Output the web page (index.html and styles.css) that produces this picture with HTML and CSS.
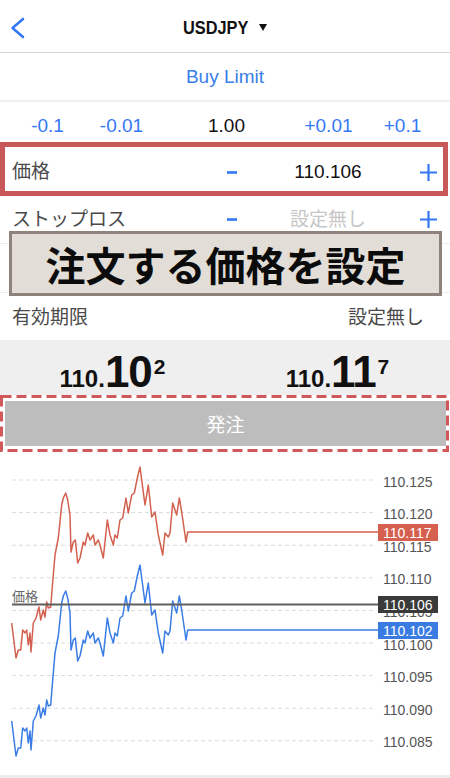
FILE: index.html
```html
<!DOCTYPE html>
<html lang="ja">
<head>
<meta charset="utf-8">
<title>USDJPY Buy Limit</title>
<link rel="stylesheet" href="styles.css">
</head>
<body>
<div class="page">
  <header class="nav">
    <svg class="back" width="16" height="22" viewBox="0 0 16 22"><path d="M14 2 L3.5 11 L14 20" fill="none" stroke="#3478f6" stroke-width="2.6" stroke-linecap="round" stroke-linejoin="round"/></svg>
    <div class="title"><span class="sym">USDJPY</span><svg class="caret" width="8" height="7" viewBox="0 0 8 7"><polygon points="0,0 8,0 4,7" fill="#111"/></svg></div>
    <div></div>
  </header>

  <div class="type">Buy Limit</div>

  <div class="steps">
    <span>-0.1</span><span>-0.01</span><span class="qty">1.00</span><span>+0.01</span><span>+0.1</span>
  </div>

  <div class="row price-row">
    <span class="label">価格</span>
    <span class="minus"><svg width="10" height="3" viewBox="0 0 10 3"><rect y="0.2" width="10" height="2.6" fill="#3478f6"/></svg></span>
    <span class="val">110.106</span>
    <span class="plus"><svg width="17" height="17" viewBox="0 0 17 17"><path d="M8.5 0 V17 M0 8.5 H17" stroke="#3478f6" stroke-width="2.2"/></svg></span>
  </div>

  <div class="row sl">
    <span class="label">ストップロス</span>
    <span class="minus"><svg width="10" height="3" viewBox="0 0 10 3"><rect y="0.2" width="10" height="2.6" fill="#3478f6"/></svg></span>
    <span class="val none">設定無し</span>
    <span class="plus"><svg width="17" height="17" viewBox="0 0 17 17"><path d="M8.5 0 V17 M0 8.5 H17" stroke="#3478f6" stroke-width="2.2"/></svg></span>
  </div>

  <div class="row tp"></div>

  <div class="exp">
    <span class="label">有効期限</span>
    <span class="label">設定無し</span>
  </div>

  <div class="quotes">
    <div class="q"><span class="s">110.</span><span class="b">10</span><span class="e">2</span></div>
    <div class="q"><span class="s">110.</span><span class="b">11</span><span class="e">7</span></div>
  </div>

  <div class="order">
    <div class="btn">発注</div>
    <svg class="dash" width="450" height="57" viewBox="0 0 450 57"><rect x="1.5" y="1.5" width="446" height="54" fill="none" stroke="#d0585b" stroke-width="3" stroke-dasharray="10 5"/></svg>
  </div>

  <svg class="chart" width="450" height="323" viewBox="0 452 450 323">
    <g stroke="#dadada" stroke-width="1" stroke-dasharray="4 3">
      <line x1="12" x2="374" y1="480" y2="480"/>
      <line x1="12" x2="374" y1="512.6" y2="512.6"/>
      <line x1="12" x2="374" y1="545.2" y2="545.2"/>
      <line x1="12" x2="374" y1="577.8" y2="577.8"/>
      <line x1="12" x2="374" y1="610.4" y2="610.4"/>
      <line x1="12" x2="374" y1="643" y2="643"/>
      <line x1="12" x2="374" y1="675.6" y2="675.6"/>
      <line x1="12" x2="374" y1="708.2" y2="708.2"/>
      <line x1="12" x2="374" y1="740.8" y2="740.8"/>
    </g>
    <g class="axis">
      <text x="383" y="486.5">110.125</text>
      <text x="383" y="519.1">110.120</text>
      <text x="383" y="551.7">110.115</text>
      <text x="383" y="584.3">110.110</text>
      <text x="383" y="616.9">110.105</text>
      <text x="383" y="649.5">110.100</text>
      <text x="383" y="682.1">110.095</text>
      <text x="383" y="714.7">110.090</text>
      <text x="383" y="747.3">110.085</text>
    </g>
    <path id="ask" d="M11.7 623 L16 658 L18.3 650 L20.7 650 L22.7 630 L25 633 L26.7 630 L28.3 645 L30 633 L31 652 L33.3 623 L36 618 L39 607 L40.7 620 L43.3 610 L45 617 L46.7 602 L48.3 608 L50.7 607 L52.7 582 L55 555 L58.3 538 L61.7 505 L63.3 498 L65.7 493 L67.7 500 L70 515 L71 552 L73.3 542 L75.3 540 L77.7 563 L80 558 L83.3 542 L85 545 L87.7 533 L90 540 L93.3 535 L95 545 L98.3 540 L100 545 L103.3 558 L107.3 520 L110 535 L113.3 545 L115 535 L117.3 538 L120 520 L122.7 518 L126 498 L128.3 513 L131.7 495 L134.3 493 L137.3 478 L140 467 L145 505 L148.3 485 L151.7 517 L155 512 L158.3 535 L162.7 555 L165 533 L168.3 537 L170 533 L172.7 503 L175 510 L176.7 515 L179.3 498 L181.7 512 L186 542 L187.7 532 L378 532" fill="none" stroke="#d4604f" stroke-width="1.5" stroke-linejoin="round"/>
    <path d="M11.7 623 L16 658 L18.3 650 L20.7 650 L22.7 630 L25 633 L26.7 630 L28.3 645 L30 633 L31 652 L33.3 623 L36 618 L39 607 L40.7 620 L43.3 610 L45 617 L46.7 602 L48.3 608 L50.7 607 L52.7 582 L55 555 L58.3 538 L61.7 505 L63.3 498 L65.7 493 L67.7 500 L70 515 L71 552 L73.3 542 L75.3 540 L77.7 563 L80 558 L83.3 542 L85 545 L87.7 533 L90 540 L93.3 535 L95 545 L98.3 540 L100 545 L103.3 558 L107.3 520 L110 535 L113.3 545 L115 535 L117.3 538 L120 520 L122.7 518 L126 498 L128.3 513 L131.7 495 L134.3 493 L137.3 478 L140 467 L145 505 L148.3 485 L151.7 517 L155 512 L158.3 535 L162.7 555 L165 533 L168.3 537 L170 533 L172.7 503 L175 510 L176.7 515 L179.3 498 L181.7 512 L186 542 L187.7 532 L378 532" transform="translate(0 98)" fill="none" stroke="#3b7de6" stroke-width="1.5" stroke-linejoin="round"/>
    <line x1="12" x2="380" y1="604.6" y2="604.6" stroke="#5f5f5f" stroke-width="2"/>
    <text class="plabel" x="12" y="601">価格</text>
    <rect x="378" y="524" width="60" height="17" fill="#d6604f"/>
    <text class="tag" x="383" y="537.5">110.117</text>
    <rect x="378" y="596" width="60" height="17" fill="#3a3a3a"/>
    <text class="tag" x="383" y="609.5">110.106</text>
    <rect x="378" y="622" width="60" height="17" fill="#3a7be2"/>
    <text class="tag" x="383" y="635.5">110.102</text>
  </svg>

  <div class="bottom"></div>

  <div class="banner">注文する価格を設定</div>
</div>
</body>
</html>
```

FILE: styles.css
```css
html, body {
  margin: 0;
  padding: 0;
  background: #ffffff;
}

body {
  font-family: "Liberation Sans", "Noto Sans CJK JP", sans-serif;
  color: #111;
}

.page {
  position: relative;
  width: 450px;
  height: 778px;
  overflow: hidden;
}

/* header */
.nav {
  height: 52px;
  border-bottom: 1px solid #d4d4d4;
  display: grid;
  grid-template-columns: 1fr auto 1fr;
  align-items: center;
}

.back {
  display: block;
  margin-left: 9px;
  margin-top: 4px;
}

.title {
  display: flex;
  align-items: center;
  font-weight: bold;
  font-size: 19px;
  line-height: 19px;
  margin-top: 2px;
}

.sym {
  display: inline-block;
  transform: scaleX(0.86);
  transform-origin: left center;
  margin-right: -10px;
}

.caret {
  display: block;
  margin-left: 9px;
}

/* order type */
.type {
  height: 47px;
  border-bottom: 2px solid #f1f1f1;
  display: flex;
  align-items: center;
  justify-content: center;
  color: #3a7ee8;
  font-size: 19px;
}

/* quantity steps */
.steps {
  height: 40px;
  box-sizing: border-box;
  padding-top: 8px;
  padding-left: 10px;
  display: grid;
  grid-template-columns: 75px 73px 137px 67px 81px;
  align-items: center;
  text-align: center;
  font-size: 19px;
  line-height: 20px;
  color: #3478f6;
}

.steps .qty {
  color: #111;
}

/* rows */
.row {
  position: relative;
  box-sizing: border-box;
  display: grid;
  grid-template-columns: 206px 27px 166px 34px;
  align-items: center;
  padding-left: 12px;
  font-size: 19px;
  line-height: 22px;
}

.row .label,
.exp .label {
  color: #4a4a4a;
}

.row .minus,
.row .plus {
  display: flex;
  justify-content: center;
}

.row .minus svg,
.row .plus svg {
  display: block;
}

.row .val {
  text-align: center;
  color: #111;
}

.row .val.none {
  color: #c6c6c6;
}

.price-row {
  height: 54px;
  padding-top: 6px;
}

.price-row::after {
  content: "";
  position: absolute;
  left: 0;
  top: 0;
  right: 2px;
  bottom: 0;
  border: 5px solid #c9585a;
}

.sl {
  height: 48px;
  border-bottom: 1px solid #ececec;
}

.tp {
  height: 49px;
  border-bottom: 1px solid #ececec;
}

.exp {
  height: 47px;
  box-sizing: border-box;
  padding: 3px 26px 0 12px;
  display: flex;
  align-items: center;
  justify-content: space-between;
  font-size: 19px;
  line-height: 22px;
}

/* quotes */
.quotes {
  height: 55px;
  box-sizing: border-box;
  padding-top: 8px;
  background: #efefef;
  display: grid;
  grid-template-columns: 1fr 1fr;
  align-items: center;
  justify-items: center;
}

.q {
  display: flex;
  align-items: baseline;
  font-weight: bold;
  color: #111;
}

.q .s {
  font-size: 24px;
  line-height: 24px;
}

.q .b {
  font-size: 44px;
  line-height: 44px;
  letter-spacing: -1px;
}

.q .e {
  align-self: flex-start;
  font-size: 21px;
  line-height: 21px;
  margin-top: 6px;
  margin-left: 2px;
}

/* order button */
.order {
  position: relative;
  height: 57px;
  box-sizing: border-box;
  padding: 6px 4px 0 5px;
}

.btn {
  height: 45px;
  background: #bdbdbd;
  color: #ffffff;
  font-size: 19px;
  display: flex;
  align-items: center;
  justify-content: center;
}

.dash {
  position: absolute;
  left: 0;
  top: 0;
}

/* chart */
.chart {
  display: block;
}

.axis text {
  font-family: "Liberation Sans", sans-serif;
  font-size: 14px;
  fill: #555555;
}

.plabel {
  font-family: "Noto Sans CJK JP", sans-serif;
  font-size: 13px;
  fill: #666666;
}

.tag {
  font-family: "Liberation Sans", sans-serif;
  font-size: 14px;
  fill: #ffffff;
}

.bottom {
  height: 3px;
  background: #ececec;
}

/* annotation banner */
.banner {
  position: absolute;
  left: 9px;
  top: 231px;
  width: 433px;
  height: 65px;
  box-sizing: border-box;
  border: 3px solid #8d837a;
  background: #e2ddd6;
  display: flex;
  align-items: center;
  justify-content: center;
  font-family: "Noto Sans CJK JP", sans-serif;
  font-size: 40px;
  line-height: 1;
  font-weight: bold;
  color: #0b0b0b;
}
```
